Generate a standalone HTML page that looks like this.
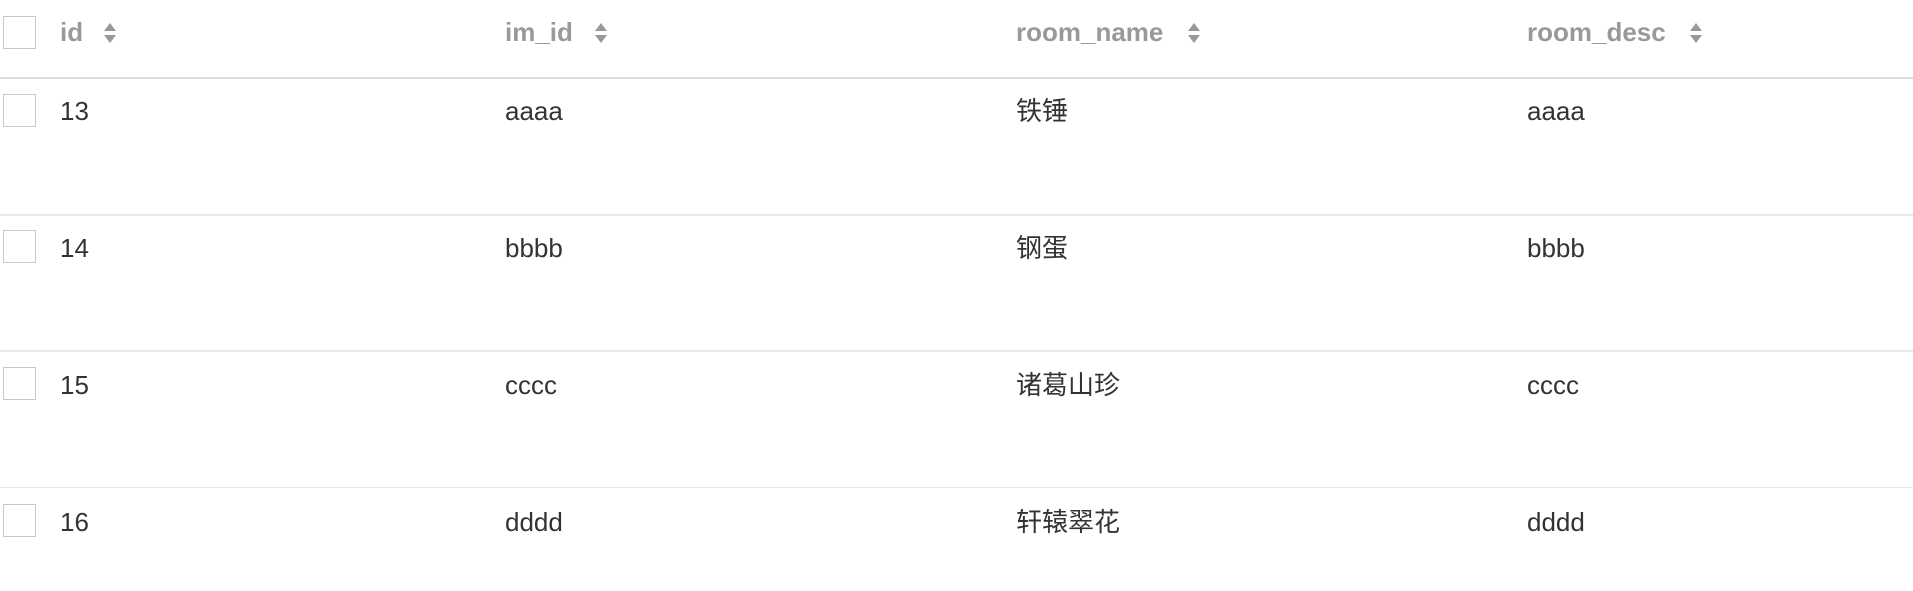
<!DOCTYPE html>
<html><head><meta charset="utf-8"><style>
body{margin:0;width:1913px;height:591px;background:#fff;overflow:hidden;font-family:"Liberation Sans","Noto Sans CJK SC",sans-serif;position:relative}
.t{position:absolute;font-size:26px;color:#333;line-height:30px;white-space:nowrap}
.h{color:#999;font-weight:bold}
.cb{position:absolute;left:3px;width:33px;height:33px;border:1px solid #c8c8c8;box-sizing:border-box;background:#fff}
.ln{position:absolute;left:0;width:1913px;height:2px;background:#e6e8ec}
.s{position:absolute;width:14px;height:22px}
</style></head><body>
<div class="cb" style="top:16px"></div>
<div class="t h" style="left:60px;top:17px">id</div>
<div class="t h" style="left:505px;top:17px">im_id</div>
<div class="t h" style="left:1016px;top:17px">room_name</div>
<div class="t h" style="left:1527px;top:17px">room_desc</div>
<svg class="s" style="left:103px;top:22px" viewBox="0 0 14 22"><path d="M7 1L13 9H1Z M7 21L13 13H1Z" fill="#999"/></svg>
<svg class="s" style="left:594px;top:22px" viewBox="0 0 14 22"><path d="M7 1L13 9H1Z M7 21L13 13H1Z" fill="#999"/></svg>
<svg class="s" style="left:1187px;top:22px" viewBox="0 0 14 22"><path d="M7 1L13 9H1Z M7 21L13 13H1Z" fill="#999"/></svg>
<svg class="s" style="left:1689px;top:22px" viewBox="0 0 14 22"><path d="M7 1L13 9H1Z M7 21L13 13H1Z" fill="#999"/></svg>
<div class="ln" style="top:77px;background:#dcdee2"></div>

<div class="cb" style="top:94px"></div>
<div class="t" style="left:60px;top:96px">13</div>
<div class="t" style="left:505px;top:96px">aaaa</div>
<div class="t" style="left:1016px;top:96px">铁锤</div>
<div class="t" style="left:1527px;top:96px">aaaa</div>
<div class="ln" style="top:214px"></div>

<div class="cb" style="top:230px"></div>
<div class="t" style="left:60px;top:233px">14</div>
<div class="t" style="left:505px;top:233px">bbbb</div>
<div class="t" style="left:1016px;top:233px">钢蛋</div>
<div class="t" style="left:1527px;top:233px">bbbb</div>
<div class="ln" style="top:350px"></div>

<div class="cb" style="top:367px"></div>
<div class="t" style="left:60px;top:370px">15</div>
<div class="t" style="left:505px;top:370px">cccc</div>
<div class="t" style="left:1016px;top:370px">诸葛山珍</div>
<div class="t" style="left:1527px;top:370px">cccc</div>
<div class="ln" style="top:487px;height:1px"></div>

<div class="cb" style="top:504px"></div>
<div class="t" style="left:60px;top:507px">16</div>
<div class="t" style="left:505px;top:507px">dddd</div>
<div class="t" style="left:1016px;top:507px">轩辕翠花</div>
<div class="t" style="left:1527px;top:507px">dddd</div>
</body></html>
